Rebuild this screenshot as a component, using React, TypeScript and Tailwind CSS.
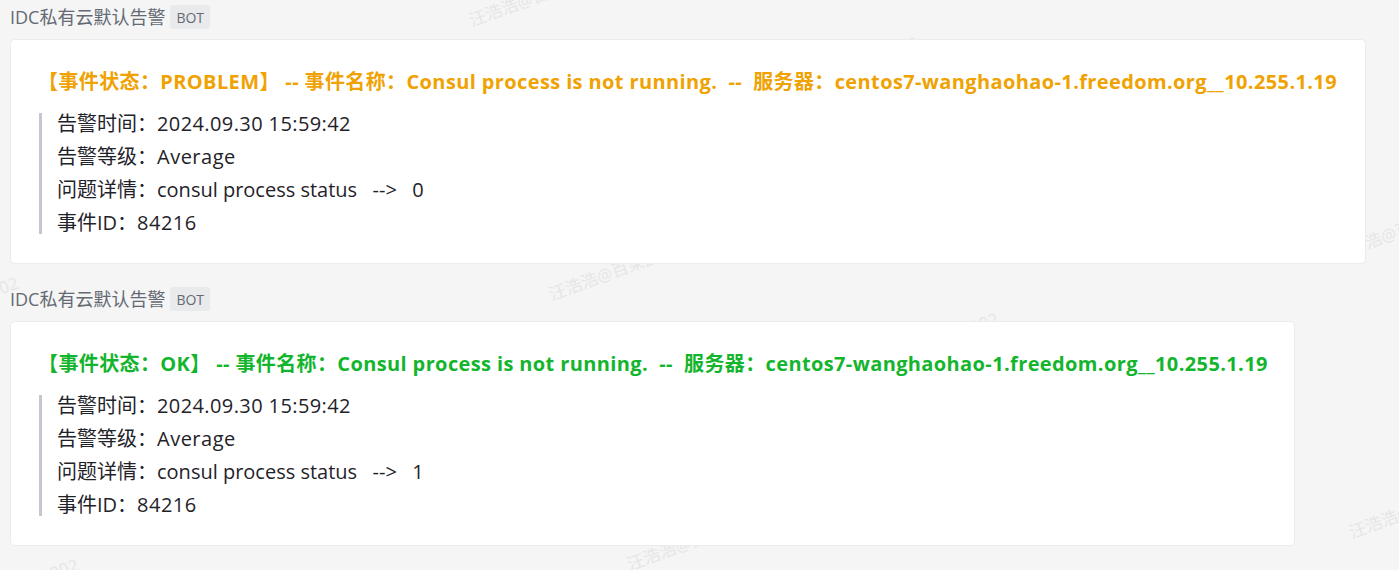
import React from 'react';

const font = { fontFamily: '"Open Sans", "Noto Sans CJK SC", sans-serif' };

type Alert = {
  status: string;
  color: string;
  value: string;
  width: string;
};

const alerts: Alert[] = [
  { status: 'PROBLEM', color: 'text-[#f0a202]', value: '0', width: 'w-[1356px]' },
  { status: 'OK', color: 'text-[#13b52d]', value: '1', width: 'w-[1285px]' },
];

function Watermark({ text, className }: { text: string; className: string }) {
  return (
    <div
      className={`absolute z-0 -rotate-[20deg] whitespace-nowrap text-[17px] text-[#e6e6e6] select-none ${className}`}
    >
      {text}
    </div>
  );
}

function AlertCard({ alert }: { alert: Alert }) {
  return (
    <div className="relative z-10">
      {/* Sender */}
      <div className="flex h-6 items-center gap-[5px]">
        <span className="text-[18px] leading-6 text-[#646a73]">IDC私有云默认告警</span>
        <span className="flex h-6 items-center rounded-[3px] bg-[#e9eaec] px-[6px] text-[14px] text-[#646a73]">
          BOT
        </span>
      </div>

      {/* Card */}
      <div
        className={`mt-[10px] rounded-[5px] border border-[#ebecee] bg-white pl-[27px] pr-[20px] pt-[28px] pb-[29px] ${alert.width}`}
      >
        <div className={`whitespace-pre text-[20px] font-bold leading-[28px] tracking-[0.38px] ${alert.color}`}>
          {`【事件状态：${alert.status}】 -- 事件名称：Consul process is not running.  --  服务器：centos7-wanghaohao-1.freedom.org__10.255.1.19`}
        </div>
        <div className="mt-[17px] ml-[1px] flex flex-col gap-[11px] border-l-[3px] border-[#c4c8ce] pl-[15px] text-[20px] leading-[22px] text-[#1f2329] whitespace-pre">
          <div>
            告警时间：<span className="tracking-[0.4px]">2024.09.30 15:59:42</span>
          </div>
          <div>
            告警等级：<span className="tracking-[0.5px]">Average</span>
          </div>
          <div>
            问题详情：consul process status
            <span className="[word-spacing:2.5px]">{`  -->  ${alert.value}`}</span>
          </div>
          <div>
            事件ID：<span className="tracking-[0.45px]">84216</span>
          </div>
        </div>
      </div>
    </div>
  );
}

export default function App() {
  return (
    <div className="relative h-[570px] w-[1399px] overflow-hidden bg-[#f5f5f5]" style={font}>
      {/* Watermarks */}
      <Watermark text="汪浩浩@百果园" className="left-[466px] top-[-12px]" />
      <Watermark text="0002" className="left-[880px] top-[36px]" />
      <Watermark text="汪浩浩@百果园" className="left-[1330px] top-[222px]" />
      <Watermark text="0002" className="left-[-20px] top-[276px]" />
      <Watermark text="汪浩浩@百果园" className="left-[546px] top-[262px]" />
      <Watermark text="0002" className="left-[960px] top-[312px]" />
      <Watermark text="汪浩浩@百果园" className="left-[1346px] top-[500px]" />
      <Watermark text="0002" className="left-[40px] top-[558px]" />
      <Watermark text="汪浩浩@百果园" className="left-[624px] top-[532px]" />

      <div className="flex flex-col gap-[23px] pl-[10px] pt-[5px]">
        {alerts.map((a) => (
          <AlertCard key={a.status} alert={a} />
        ))}
      </div>
    </div>
  );
}
